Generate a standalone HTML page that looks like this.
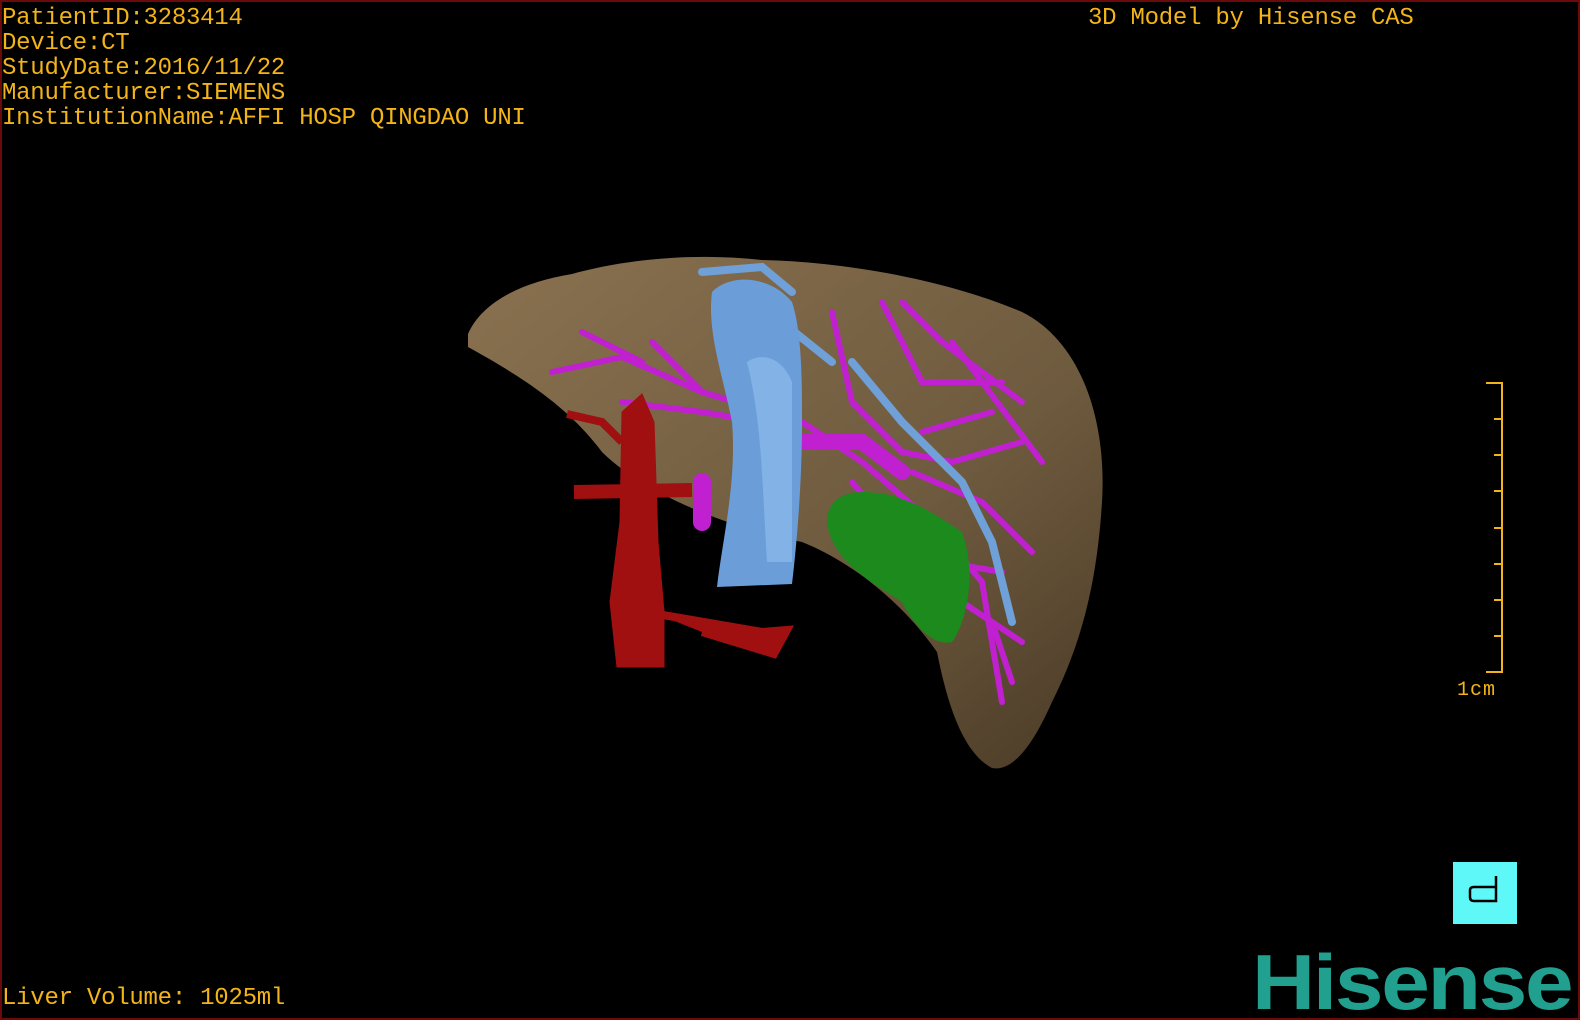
<!DOCTYPE html>
<html><head><meta charset="utf-8"><style>
html,body{margin:0;padding:0;background:#000;}
#c{position:relative;width:1580px;height:1020px;background:#000;overflow:hidden;box-sizing:border-box;border:2px solid #6a0a0a;}
.t{position:absolute;color:#f2b418;font-family:"Liberation Mono",monospace;font-size:24px;line-height:25px;white-space:pre;letter-spacing:-0.25px;}
</style></head><body><div id="c">
<div class="t" style="left:0;top:4px">PatientID:3283414
Device:CT
StudyDate:2016/11/22
Manufacturer:SIEMENS
InstitutionName:AFFI HOSP QINGDAO UNI</div>
<div class="t" style="left:1086px;top:4px">3D Model by Hisense CAS</div>
<div class="t" style="left:0;top:984px">Liver Volume: 1025ml</div>
<div class="t" style="left:1455px;top:676px;font-size:20px;letter-spacing:1px">1cm</div>
<svg width="1580" height="1020" style="position:absolute;left:0;top:0">
<defs><linearGradient id="lv" x1="0" y1="0" x2="1" y2="1"><stop offset="0" stop-color="#8a7250"/><stop offset="0.6" stop-color="#6e5a3e"/><stop offset="1" stop-color="#4a3a26"/></linearGradient></defs>
<path d="M466 332 C480 300 520 280 570 272 C620 258 690 250 760 258 C850 260 950 280 1020 310 C1080 340 1105 420 1100 500 C1095 580 1080 640 1050 700 C1030 745 1010 770 990 766 C960 750 945 700 935 650 C900 600 850 560 800 540 C700 520 630 480 600 450 C570 410 530 380 466 345 Z" fill="url(#lv)"/>
<g stroke="#c020d0" stroke-width="6" fill="none" stroke-linecap="round">
<path d="M550 370 L620 355 L700 390 L800 420 L860 460 L930 520 L980 580 L1000 700"/>
<path d="M580 330 L640 360 M650 340 L700 390 M620 400 L700 410 L760 420"/>
<path d="M830 310 L850 400 L900 450 L950 460 L1020 440 M880 300 L920 380 L1000 380 M900 300 L940 340 L1020 400 M950 340 L1040 460 M910 470 L980 500 L1030 550 M850 480 L900 540 L960 600 L1020 640 M990 620 L1010 680 M920 430 L990 410 M940 560 L1000 570 M860 520 L940 590"/>
<path d="M800 440 L860 440 L900 470" stroke-width="16"/>
<path d="M700 480 L700 520" stroke-width="18"/>
</g>
<path d="M860 490 C900 490 930 510 960 530 C975 570 965 620 950 640 C930 645 910 620 900 600 C870 580 830 560 825 520 C825 500 840 490 860 490 Z" fill="#1d8a1d"/>
<g stroke="#6fa0d8" fill="none" stroke-linecap="round">
<path d="M850 360 L900 420 L960 480 L990 540 L1010 620" stroke-width="8"/>
<path d="M700 270 L760 265 L790 290 M780 320 L830 360" stroke-width="8"/>
</g>
<path d="M710 290 C730 270 770 275 790 300 C800 330 800 380 800 420 C800 480 795 540 790 582 L715 585 C720 540 735 480 730 420 C720 370 705 330 710 290 Z" fill="#6b9ed8"/>
<path d="M745 360 C760 350 780 355 790 380 L790 560 L765 560 C760 480 760 420 745 360 Z" fill="#82b2e6"/>
<g fill="#a01010" stroke="#a01010">
<path d="M620 410 L640 392 L652 420 L656 540 L662 610 L662 665 L615 665 L608 600 L618 520 Z"/>
<path d="M572 490 L690 488" stroke-width="14"/>
<path d="M565 412 L600 420 L620 440" stroke-width="8" fill="none"/>
<path d="M655 612 L760 630 L785 628 L772 652 L700 630" stroke-width="8"/>
</g>
<g stroke="#f2b418" stroke-width="2" fill="none">
<path d="M1484 381 H1500 V670 H1484"/>
<path d="M1492 417H1500M1492 453H1500M1492 489H1500M1492 526H1500M1492 562H1500M1492 598H1500M1492 634H1500"/>
</g>
<rect x="1451" y="860" width="64" height="62" fill="#5ff8f8"/>
<path d="M1494 874 V899 H1472 Q1468 899 1468 895 V888 Q1468 885 1472 885 H1494" stroke="#000" stroke-width="2.5" fill="none"/>
</svg>
<div style="position:absolute;left:1250px;top:940px;color:#21a090;font-family:'Liberation Sans',sans-serif;font-weight:bold;font-size:78px;line-height:80px;letter-spacing:-2px;transform:scaleX(1.12);transform-origin:left">Hisense</div>
</div></body></html>
